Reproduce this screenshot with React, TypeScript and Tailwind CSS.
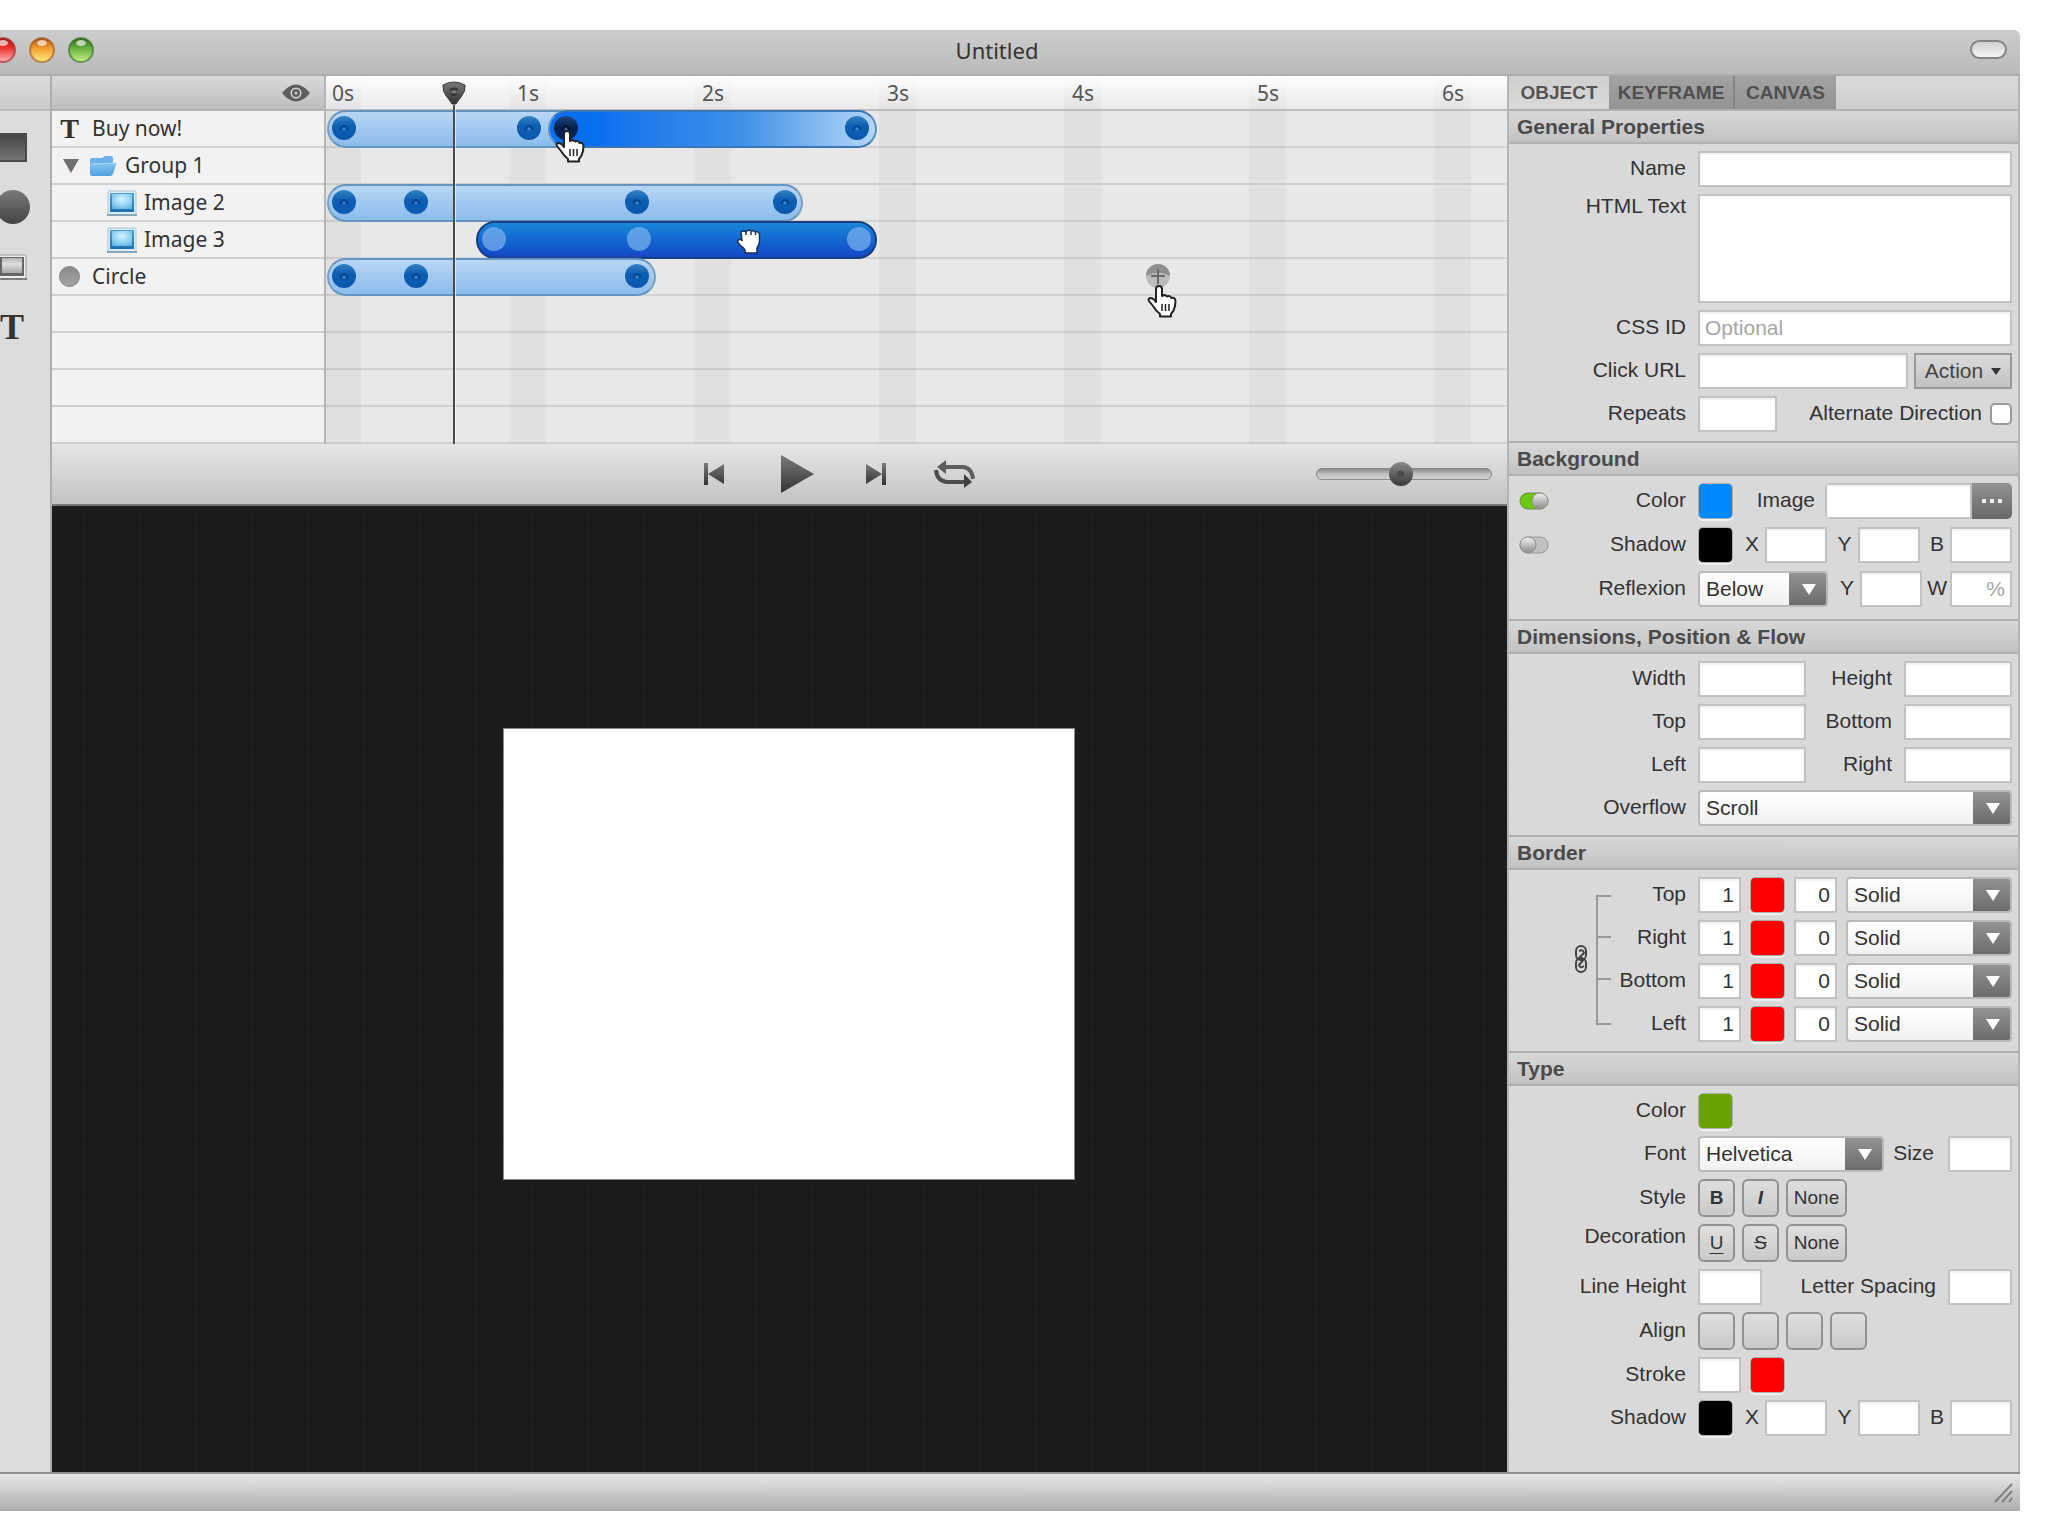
import React from 'react';

const RULER = ['0s', '1s', '2s', '3s', '4s', '5s', '6s'];

type Keyframe = { x: number; dark?: boolean };
type Bar = { start: number; end: number; kind: 'light' | 'fade' | 'solid'; keys: Keyframe[] };
type Layer = { name: string; icon: 'text' | 'group' | 'image' | 'circle' | null; bars: Bar[] };

// bar and keyframe positions are in timeline pixels, 185px per second
const LAYERS: Layer[] = [
  {
    name: 'Buy now!',
    icon: 'text',
    bars: [
      { start: 1, end: 250, kind: 'light', keys: [{ x: 18 }, { x: 203 }] },
      { start: 222, end: 551, kind: 'fade', keys: [{ x: 240, dark: true }, { x: 531 }] },
    ],
  },
  { name: 'Group 1', icon: 'group', bars: [] },
  {
    name: 'Image 2',
    icon: 'image',
    bars: [{ start: 1, end: 477, kind: 'light', keys: [{ x: 18 }, { x: 90 }, { x: 311 }, { x: 459 }] }],
  },
  {
    name: 'Image 3',
    icon: 'image',
    bars: [{ start: 150, end: 551, kind: 'solid', keys: [{ x: 168 }, { x: 313 }, { x: 533 }] }],
  },
  {
    name: 'Circle',
    icon: 'circle',
    bars: [{ start: 1, end: 330, kind: 'light', keys: [{ x: 18 }, { x: 90 }, { x: 311 }] }],
  },
  { name: '', icon: null, bars: [] },
  { name: '', icon: null, bars: [] },
  { name: '', icon: null, bars: [] },
  { name: '', icon: null, bars: [] },
];

const BAR_STYLE = {
  light: 'border-[#7d9fc0] border-y-[#6495c2] bg-linear-to-b from-[#b8d6f5] to-[#8bbcec]',
  fade: 'border-[#5b8fc9] border-y-[#3a76ba] bg-linear-to-r from-[#0a6fee] from-15% via-[#3f92e8] via-60% to-[#b5d6f5]',
  solid: 'border-[#173f80] bg-linear-to-b from-[#1a86d8] to-[#1546c6]',
};

const Defs = () => (
  <svg className="absolute h-0 w-0" aria-hidden="true">
    <defs>
      <linearGradient id="key" x1="0" y1="0" x2="0" y2="1">
        <stop offset="0" stopColor="#3583c4" />
        <stop offset="0.4" stopColor="#0d5fb4" />
        <stop offset="1" stopColor="#0a58ad" />
      </linearGradient>
      <linearGradient id="keyDark" x1="0" y1="0" x2="0" y2="1">
        <stop offset="0" stopColor="#1d477e" />
        <stop offset="0.5" stopColor="#04214f" />
        <stop offset="1" stopColor="#04245a" />
      </linearGradient>
      <linearGradient id="steel" x1="0" y1="0" x2="0" y2="1">
        <stop offset="0" stopColor="#7a7a7a" />
        <stop offset="1" stopColor="#333333" />
      </linearGradient>
      <linearGradient id="picture" x1="0" y1="0" x2="0" y2="1">
        <stop offset="0" stopColor="#4f9fd2" />
        <stop offset="1" stopColor="#1d6fae" />
      </linearGradient>
      <radialGradient id="pictureGlow" cx="0.5" cy="0.35" r="0.75">
        <stop offset="0" stopColor="#d5f3ff" />
        <stop offset="0.6" stopColor="#8fd0f3" />
        <stop offset="1" stopColor="#5fb0e0" />
      </radialGradient>
      <linearGradient id="pictureGray" x1="0" y1="0" x2="0" y2="1">
        <stop offset="0" stopColor="#b5b5b5" />
        <stop offset="0.4" stopColor="#dedede" />
        <stop offset="1" stopColor="#a8a8a8" />
      </linearGradient>
      <linearGradient id="folder" x1="0" y1="0" x2="0" y2="1">
        <stop offset="0" stopColor="#86c4f3" />
        <stop offset="1" stopColor="#4f9fe3" />
      </linearGradient>
      <linearGradient id="knob" x1="0" y1="0" x2="0" y2="1">
        <stop offset="0" stopColor="#f2f2f2" />
        <stop offset="1" stopColor="#8b8b8b" />
      </linearGradient>
    </defs>
  </svg>
);

const LIGHTS = [
  { name: 'Close', id: 'lr', top: '#a3201d', mid: '#ec2f2b', low: '#ffb9b4' },
  { name: 'Minimize', id: 'ly', top: '#a8500f', mid: '#f0982b', low: '#ffef86' },
  { name: 'Zoom', id: 'lg', top: '#2f6b1d', mid: '#62ad3a', low: '#c9f08c' },
];

const TrafficLights = () => (
  <div className="-ml-[10px] flex gap-[13px]">
    {LIGHTS.map((l) => (
      <button key={l.id} aria-label={l.name} className="h-[26px] w-[26px]">
        <svg viewBox="0 0 26 26">
          <defs>
            <linearGradient id={l.id} x1="0" y1="0" x2="0" y2="1">
              <stop offset="0" stopColor={l.top} />
              <stop offset="0.4" stopColor={l.mid} />
              <stop offset="1" stopColor={l.low} />
            </linearGradient>
          </defs>
          <circle cx="13" cy="13" r="12" fill={`url(#${l.id})`} stroke={l.top} strokeOpacity="0.6" strokeWidth="2" />
          <ellipse cx="13" cy="6" rx="5" ry="3" fill="#fff" fillOpacity="0.65" />
        </svg>
      </button>
    ))}
  </div>
);

const PictureIcon = ({ gray }: { gray?: boolean }) => (
  <svg viewBox="0 0 30 26" className="h-[26px] w-[30px] shrink-0">
    <rect x="1" y="1" width="28" height="24" rx="1" fill={gray ? '#ededed' : '#dcecf7'} stroke={gray ? '#9a9a9a' : '#a9c4d8'} />
    <rect x="3" y="3" width="24" height="19" fill={gray ? '#666' : 'url(#picture)'} />
    <rect x="5" y="4" width="20" height="15" fill={gray ? 'url(#pictureGray)' : 'url(#pictureGlow)'} />
    <path d="M0 25h30" stroke={gray ? '#7d7d7d' : '#87a5bb'} strokeWidth="2" />
  </svg>
);

const FolderIcon = () => (
  <svg viewBox="0 0 28 22" className="h-[22px] w-[28px] shrink-0">
    <path d="M1 5Q1 3 3 3h10l3-2h6q2 0 2 2v6H1z" fill="#6bb2ec" />
    <path d="M5 8h21q2 0 1 2l-3 9q-1 2-3 2H3q-2 0-2-2V9z" fill="url(#folder)" />
    <path d="M4 9q10 0 22-1" stroke="#b5dcf9" fill="none" />
  </svg>
);

const HandPointer = () => (
  <svg viewBox="0 0 30 33" className="h-[33px] w-[30px]">
    <path
      d="M9 4Q9 1 12 1t3 3v7q3-2 5 .5 3-1.500 4.500 1.500Q28 12 28.500 16l-.5 5q-1 5-4 8v2.500H13V29q-4-3-7-8l-4-5q-1.500-3 2-3 3 .5 5 4z"
      fill="#fff"
      stroke="#222"
      strokeWidth="2"
      strokeLinejoin="round"
    />
    <path d="M15 19v7M18.500 19v7M22 19v7" stroke="#222" strokeWidth="1.500" />
  </svg>
);

const HandGrab = () => (
  <svg viewBox="0 0 26 25" className="h-[25px] w-[26px]">
    <path
      d="M5 3q3-2 5 0 2-3 5-1 3-1 4 1 4-1 4.500 2.500V12q0 4-2.500 7v5H9v-3q-2-3-5-5-4-4-1-5.500 1-.5 3 1z"
      fill="#fff"
      stroke="#1b2c50"
      strokeWidth="1.500"
      strokeLinejoin="round"
    />
    <path d="M10 3v3M15 2.500V6M19.500 3.500V6" stroke="#1b2c50" strokeWidth="1.500" />
  </svg>
);

const KeyDot = ({ kind, dark }: { kind: Bar['kind']; dark?: boolean }) => (
  <svg viewBox="0 0 24 24" className="h-6 w-6">
    {kind === 'solid' ? (
      <circle cx="12" cy="12" r="12" fill="#7db2ee" fillOpacity="0.7" />
    ) : (
      <>
        <circle cx="12" cy="12" r="12" fill={dark ? 'url(#keyDark)' : 'url(#key)'} />
        <path d="M8 14Q12 6 16 14" fill="none" stroke={dark ? '#01122f' : '#05458f'} strokeWidth="2" />
        <path d="M10 14h4l-2-3z" fill={dark ? '#3f6aa3' : '#3d8bd2'} />
      </>
    )}
  </svg>
);

const LayerRow = ({ layer }: { layer: Layer }) => (
  <div
    className={`flex h-[37px] items-center border-b-2 border-[#d0d0d0] bg-[#f2f2f2] text-[21px] leading-6 text-[#333] ${
      layer.icon === 'image' ? 'gap-[7px] pl-[55px]' : 'gap-3 pl-[7px]'
    }`}
  >
    {layer.icon === 'text' && <span className="w-[21px] text-center font-['Liberation_Serif',serif] text-[28px] font-bold">T</span>}
    {layer.icon === 'group' && (
      <button aria-label="Collapse group" className="w-[18px] pl-1">
        <svg viewBox="0 0 16 14" className="h-[14px] w-4">
          <path d="M0 0h16L8 14z" fill="#6f6f6f" />
        </svg>
      </button>
    )}
    {layer.icon === 'group' && <FolderIcon />}
    {layer.icon === 'image' && <PictureIcon />}
    {layer.icon === 'circle' && <span className="h-[21px] w-[21px] rounded-full border border-[#808080] bg-linear-to-b from-[#8b8b8b] to-[#a3a3a3]" />}
    <span className={`pb-[2px] ${layer.icon === 'group' ? '-ml-1' : ''}`}>{layer.name}</span>
  </div>
);

const TrackRow = ({ layer }: { layer: Layer }) => (
  <div className="relative h-[37px] border-b-2 border-[#00000018]">
    {layer.bars.map((bar) => (
      <div
        key={bar.start}
        className={`absolute -top-px -bottom-[2px] rounded-full border-2 ${BAR_STYLE[bar.kind]}`}
        style={{ left: bar.start, width: bar.end - bar.start }}
      >
        {bar.keys.map((k) => (
          <span key={k.x} className="absolute top-1 -ml-[14px]" style={{ left: k.x - bar.start }}>
            <KeyDot kind={bar.kind} dark={k.dark} />
          </span>
        ))}
      </div>
    ))}
  </div>
);

const Timeline = () => (
  <div className="flex">
    <div className="w-[274px] shrink-0 border-r-2 border-[#b5b5b5]">
      <div className="flex h-[35px] items-center justify-end border-b-2 border-[#b4b4b4] bg-linear-to-b from-[#dadada] to-[#bdbdbd] pr-[14px]">
        <svg viewBox="0 0 28 18" className="h-[18px] w-7">
          <path d="M0 9Q14-8 28 9 14 26 0 9z" fill="#5c5c5c" />
          <circle cx="14" cy="9" r="5.500" fill="#d8d8d8" />
          <circle cx="14" cy="9" r="4" fill="#5c5c5c" />
          <circle cx="14" cy="9" r="1.500" fill="#cfcfcf" />
        </svg>
      </div>
      {LAYERS.map((layer, i) => (
        <LayerRow key={i} layer={layer} />
      ))}
    </div>

    <div className="relative min-w-0 flex-1 overflow-hidden bg-[#e8e8e8] bg-[repeating-linear-gradient(90deg,#e0e0e0_0_35px,#e8e8e8_35px_183px,#e0e0e0_183px_185px)]">
      <div className="flex h-[35px] items-center overflow-hidden border-b-2 border-[#bdbdbd] bg-linear-to-b from-white/95 to-white/10 text-[21px] leading-6 text-[#555]">
        {RULER.map((t) => (
          <span key={t} className="w-[185px] shrink-0 pl-[6px]">
            {t}
          </span>
        ))}
      </div>
      {LAYERS.map((layer, i) => (
        <TrackRow key={i} layer={layer} />
      ))}

      {/* Playhead */}
      <div className="absolute inset-y-0 left-[116px] flex w-6 flex-col items-center pt-[5px]">
        <svg viewBox="0 0 24 24" className="h-6 w-6 shrink-0">
          <path d="M1 4Q12-2 23 4q1 6-4 12-4 5-5 7h-4q-1-2-5-7Q0 10 1 4z" fill="url(#steel)" stroke="#3c3c3c" />
          <path d="M8 9q4-3 8 0M9 13q3 2 6 0" fill="none" stroke="#333" strokeWidth="2" />
          <path d="M10 11h4" stroke="#7d7d7d" strokeWidth="2" />
        </svg>
        <div className="w-[2px] flex-1 bg-[#4a4a4a] shadow-[1px_0_0_rgba(255,255,255,0.6)]" />
      </div>

      {/* New keyframe marker and cursors */}
      <svg viewBox="0 0 24 24" className="absolute top-[188px] left-[820px] h-6 w-6">
        <circle cx="12" cy="12" r="12" fill="#bcbcbc" />
        <path d="M0 12a12 12 0 0 1 24 0Q12 5 0 12z" fill="#8f8f8f" />
        <path d="M12 5v15M5 12h14" stroke="#686868" strokeWidth="2" />
      </svg>
      <div className="absolute top-[209px] left-[821px]">
        <HandPointer />
      </div>
      <div className="absolute top-[54px] left-[229px]">
        <HandPointer />
      </div>
      <div className="absolute top-[153px] left-[410px]">
        <HandGrab />
      </div>
    </div>
  </div>
);

const Transport = () => (
  <div className="flex h-[62px] items-center border-b-2 border-[#777] bg-linear-to-b from-[#e6e6e6] to-[#c3c3c3]">
    <div className="w-[136px] shrink-0" />
    <div className="flex-1" />
    <div className="flex items-center">
      <button aria-label="Go to start" className="mr-[57px]">
        <svg viewBox="0 0 20 24" className="h-6 w-5">
          <path d="M0 1h4v22H0zM20 2v20L4 12z" fill="url(#steel)" />
        </svg>
      </button>
      <button aria-label="Play" className="mr-[52px]">
        <svg viewBox="0 0 33 38" className="h-[38px] w-[33px]">
          <path d="M0 0l33 19L0 38z" fill="url(#steel)" />
        </svg>
      </button>
      <button aria-label="Go to end" className="mr-12">
        <svg viewBox="0 0 20 24" className="h-6 w-5">
          <path d="M16 1h4v22h-4zM0 2v20l16-10z" fill="url(#steel)" />
        </svg>
      </button>
      <button aria-label="Loop">
        <svg viewBox="0 0 42 28" className="h-7 w-[42px]">
          <path d="M10 7h19q9 1 10 12" fill="none" stroke="#5e5e5e" strokeWidth="4" />
          <path d="M12 0v14L3 7z" fill="#5e5e5e" />
          <path d="M31 22H13Q3 21 2 10" fill="none" stroke="#4d4d4d" strokeWidth="4" />
          <path d="M30 14v14l8-6z" fill="#3f3f3f" />
        </svg>
      </button>
    </div>
    <div className="flex flex-1 justify-end pr-[15px]">
      <input
        type="range"
        aria-label="Timeline zoom"
        defaultValue={48}
        className="h-6 w-[176px] appearance-none bg-transparent [&::-webkit-slider-runnable-track]:h-3 [&::-webkit-slider-runnable-track]:rounded-full [&::-webkit-slider-runnable-track]:border [&::-webkit-slider-runnable-track]:border-[#8c8c8c] [&::-webkit-slider-runnable-track]:bg-linear-to-b [&::-webkit-slider-runnable-track]:from-[#8a8a8a] [&::-webkit-slider-runnable-track]:via-[#c0c0c0] [&::-webkit-slider-runnable-track]:to-[#d2d2d2] [&::-webkit-slider-thumb]:-mt-[7px] [&::-webkit-slider-thumb]:h-6 [&::-webkit-slider-thumb]:w-6 [&::-webkit-slider-thumb]:appearance-none [&::-webkit-slider-thumb]:rounded-full [&::-webkit-slider-thumb]:bg-[radial-gradient(circle,#4a4a4a_0_3px,transparent_4px),linear-gradient(#8b8b8b,#383838)]"
      />
    </div>
  </div>
);

const TOOLBTN = 'flex h-[60px] items-center';

const Toolbar = () => (
  <div className="w-[52px] shrink-0 border-r-2 border-[#adadad] bg-[#dcdcdc]">
    <div className="h-[35px] border-b-2 border-[#bcbcbc] bg-linear-to-b from-[#dcdcdc] to-[#cacaca]" />
    <div className="flex flex-col items-start pt-[6px]">
      <button aria-label="Rectangle" className={TOOLBTN}>
        <span className="block h-[29px] w-[27px] border-2 border-l-0 border-[#4a4a4a] bg-linear-to-b from-[#484848] to-[#747474]" />
      </button>
      <button aria-label="Ellipse" className={TOOLBTN}>
        <span className="-ml-1 block h-[34px] w-[34px] rounded-full bg-linear-to-b from-[#7a7a7a] to-[#444]" />
      </button>
      <button aria-label="Image" className={TOOLBTN}>
        <span className="-ml-[3px] block">
          <PictureIcon gray />
        </span>
      </button>
      <button aria-label="Text" className={`${TOOLBTN} font-['Liberation_Serif',serif] text-[36px] font-bold text-[#333]`}>
        T
      </button>
    </div>
  </div>
);

/* ---------- Inspector ---------- */

const Section = ({ title, loose, children }: { title: string; loose?: boolean; children: React.ReactNode }) => (
  <section>
    <h2 className="flex h-[35px] items-center border-y-2 border-[#b0b0b0] bg-linear-to-b from-[#d8d8d8] to-[#c2c2c2] pl-2 text-[21px] font-bold text-[#4a4a4a]">
      {title}
    </h2>
    <div className={`relative flex flex-col pt-[7px] pr-[6px] ${loose ? 'gap-2 pb-3' : 'gap-[7px] pb-[9px]'}`}>{children}</div>
  </section>
);

const Row = ({ label, htmlFor, top, lead, children }: { label: string; htmlFor?: string; top?: boolean; lead?: React.ReactNode; children: React.ReactNode }) => (
  <div className={`flex ${top ? 'items-start' : 'items-center'}`}>
    <div className="flex w-[189px] shrink-0 items-center pr-3 pl-[10px]">
      {lead}
      {htmlFor ? (
        <label htmlFor={htmlFor} className="flex-1 text-right">
          {label}
        </label>
      ) : (
        <span className="flex-1 pb-[2px] text-right">{label}</span>
      )}
    </div>
    <div className="flex min-w-0 flex-1 items-center">{children}</div>
  </div>
);

const Field = ({ id, className, ...rest }: React.InputHTMLAttributes<HTMLInputElement>) => (
  <input
    id={id}
    className={`h-9 min-w-0 border-2 border-[#c2c2c2] bg-white px-[5px] shadow-[inset_0_2px_2px_rgba(0,0,0,0.06)] outline-none placeholder:text-[#a5a5a5] ${className}`}
    {...rest}
  />
);

const Swatch = ({ id, color, label }: { id?: string; color: string; label?: string }) => (
  <input
    id={id}
    type="color"
    aria-label={label}
    defaultValue={color}
    className="h-9 w-[35px] shrink-0 appearance-none overflow-hidden rounded-[5px] border border-black/20 shadow-[0_2px_1px_rgba(255,255,255,0.6)] [&::-webkit-color-swatch]:border-0 [&::-webkit-color-swatch-wrapper]:p-0"
  />
);

const Select = ({ id, label, options, className }: { id?: string; label?: string; options: string[]; className: string }) => (
  <div className={`relative h-9 overflow-hidden rounded-[4px] border-2 border-[#b9b9b9] bg-linear-to-b from-white to-[#f1f1f1] ${className}`}>
    <select id={id} aria-label={label} className="h-full w-full appearance-none bg-transparent pr-10 pl-[6px] leading-6 outline-none">
      {options.map((o) => (
        <option key={o}>{o}</option>
      ))}
    </select>
    <span className="pointer-events-none absolute -top-[2px] -right-[2px] flex h-9 w-[39px] items-center justify-center bg-linear-to-b from-[#959595] to-[#6a6a6a]">
      <svg viewBox="0 0 16 11" className="h-[11px] w-4">
        <path d="M1 0h14L8 11z" fill="#fff" />
      </svg>
    </span>
  </div>
);

const Push = ({ className, ...rest }: React.ButtonHTMLAttributes<HTMLButtonElement>) => (
  <button className={`h-[38px] rounded-[6px] border-2 border-[#929292] bg-linear-to-b from-[#dedede] to-[#cacaca] text-[19px] leading-6 ${className}`} {...rest} />
);

const Toggle = ({ on, label }: { on: boolean; label: string }) => (
  <button role="switch" aria-checked={on} aria-label={label}>
    <svg viewBox="0 0 30 18" className="h-[18px] w-[30px]">
      <rect x="1" y="1" width="28" height="16" rx="8" fill={on ? '#6cc90d' : '#c2c2c2'} stroke={on ? '#6c8b50' : '#989898'} />
      <circle cx={on ? 21 : 9} cy="9" r="8" fill="url(#knob)" stroke="#8f8f8f" />
    </svg>
  </button>
);

const Offsets = ({ id, axes }: { id: string; axes: string[] }) => (
  <div className="flex flex-1 items-center justify-between pl-3">
    {axes.map((a) => (
      <span key={a} className="flex items-center gap-[6px]">
        <label htmlFor={`${id}-${a}`}>{a}</label>
        <Field id={`${id}-${a}`} className="w-[62px]" />
      </span>
    ))}
  </div>
);

const Pair = ({ a, b }: { a: string; b: string }) => (
  <Row label={a} htmlFor={a}>
    <Field id={a} className="w-[108px]" />
    <label htmlFor={b} className="flex-1 pr-3 text-right">
      {b}
    </label>
    <Field id={b} className="w-[108px]" />
  </Row>
);

const Inspector = () => (
  <aside className="w-[513px] shrink-0 border-x-2 border-[#b5b5b5] bg-[#d9d9d9] font-['Liberation_Sans',Arial,sans-serif] text-[21px] leading-6 text-[#333] [&_label]:pb-[2px]">
    <div className="flex h-[33px] bg-linear-to-b from-[#dadada] to-[#cfcfcf] text-[19px] font-bold text-[#555]">
      <button className="w-[100px] bg-linear-to-b from-[#cfcfcf] to-[#d9d9d9]">OBJECT</button>
      <button className="w-[126px] border-r-2 border-[#858585] bg-linear-to-b from-[#a3a3a3] to-[#939393] text-[#4f4f4f]">KEYFRAME</button>
      <button className="w-[101px] bg-linear-to-b from-[#a3a3a3] to-[#939393] text-[#4f4f4f]">CANVAS</button>
    </div>

    <Section title="General Properties">
      <Row label="Name" htmlFor="name">
        <Field id="name" className="flex-1" />
      </Row>
      <Row label="HTML Text" htmlFor="html" top>
        <textarea id="html" className="h-[109px] flex-1 resize-none border-2 border-[#c2c2c2] bg-white p-[6px] outline-none" />
      </Row>
      <Row label="CSS ID" htmlFor="cssid">
        <Field id="cssid" placeholder="Optional" className="flex-1" />
      </Row>
      <Row label="Click URL" htmlFor="url">
        <Field id="url" className="mr-[6px] flex-1" />
        <button className="flex h-9 w-[98px] items-center justify-center gap-2 border-2 border-[#999] bg-linear-to-b from-[#dcdcdc] to-[#c2c2c2] text-[#444]">
          Action
          <svg viewBox="0 0 10 7" className="h-[7px] w-[10px]">
            <path d="M0 0h10L5 7z" fill="#333" />
          </svg>
        </button>
      </Row>
      <Row label="Repeats" htmlFor="repeats">
        <Field id="repeats" className="w-[79px]" />
        <label htmlFor="alternate" className="flex-1 pr-2 text-right">
          Alternate Direction
        </label>
        <input id="alternate" type="checkbox" className="h-[22px] w-[22px] appearance-none rounded-[5px] border-2 border-[#999] bg-white" />
      </Row>
    </Section>

    <Section title="Background" loose>
      <Row label="Color" htmlFor="bgcolor" lead={<Toggle on label="Background enabled" />}>
        <Swatch id="bgcolor" color="#0088ff" />
        <label htmlFor="bgimage" className="flex-1 pr-[10px] text-right">
          Image
        </label>
        <div className="flex w-[187px] overflow-hidden rounded-[5px]">
          <Field id="bgimage" className="flex-1" />
          <button aria-label="Choose image" className="flex h-9 w-10 items-center justify-center bg-linear-to-b from-[#929292] to-[#686868]">
            <svg viewBox="0 0 20 4" className="h-1 w-5">
              <path d="M0 0h4v4H0zM8 0h4v4H8zM16 0h4v4h-4z" fill="#eee" />
            </svg>
          </button>
        </div>
      </Row>
      <Row label="Shadow" htmlFor="bgshadow" lead={<Toggle on={false} label="Shadow enabled" />}>
        <Swatch id="bgshadow" color="#000000" />
        <Offsets id="bg" axes={['X', 'Y', 'B']} />
      </Row>
      <Row label="Reflexion" htmlFor="reflexion">
        <Select id="reflexion" options={['Below']} className="w-[130px]" />
        <div className="flex flex-1 items-center justify-between pl-3">
          <span className="flex items-center gap-[6px]">
            <label htmlFor="refl-y">Y</label>
            <Field id="refl-y" className="w-[62px]" />
          </span>
          <span className="flex items-center gap-[3px]">
            <label htmlFor="refl-w">W</label>
            <Field id="refl-w" placeholder="%" className="w-[62px] text-right" />
          </span>
        </div>
      </Row>
    </Section>

    <Section title="Dimensions, Position & Flow">
      <Pair a="Width" b="Height" />
      <Pair a="Top" b="Bottom" />
      <Pair a="Left" b="Right" />
      <Row label="Overflow" htmlFor="overflow">
        <Select id="overflow" options={['Scroll']} className="flex-1" />
      </Row>
    </Section>

    <Section title="Border">
      <svg viewBox="0 0 40 130" className="absolute top-[25px] left-[64px] h-[130px] w-10">
        <path d="M38 1H24v128h14M24 42h14M24 84h14" fill="none" stroke="#999" strokeWidth="2" />
        <g fill="none" stroke="#444" strokeWidth="2">
          <rect x="3" y="51" width="10" height="14" rx="5" />
          <rect x="3" y="63" width="10" height="14" rx="5" />
          <path d="M6 56q4-2 5 2l-5 5M11 64l-5 6q1 4 5 1" />
        </g>
      </svg>
      {['Top', 'Right', 'Bottom', 'Left'].map((side) => (
        <Row key={side} label={side} htmlFor={`border-${side}`}>
          <div className="flex flex-1 items-center gap-[9px]">
            <Field id={`border-${side}`} defaultValue="1" className="w-[43px] text-right" />
            <Swatch label={`${side} border color`} color="#ff0000" />
            <Field aria-label={`${side} radius`} defaultValue="0" className="w-[43px] text-right" />
            <Select label={`${side} border style`} options={['Solid']} className="flex-1" />
          </div>
        </Row>
      ))}
    </Section>

    <Section title="Type">
      <Row label="Color" htmlFor="typecolor">
        <Swatch id="typecolor" color="#6ba100" />
      </Row>
      <Row label="Font" htmlFor="font">
        <Select id="font" options={['Helvetica']} className="w-[186px]" />
        <label htmlFor="size" className="flex-1 pr-[14px] text-right">
          Size
        </label>
        <Field id="size" className="w-16" />
      </Row>
      <Row label="Style">
        <div className="flex gap-[7px]">
          <Push className="w-[37px] font-bold">B</Push>
          <Push className="w-[37px] font-bold italic">I</Push>
          <Push className="w-[61px]">None</Push>
        </div>
      </Row>
      <Row label="Decoration" top>
        <div className="flex gap-[7px]">
          <Push className="w-[37px] underline underline-offset-4">U</Push>
          <Push className="w-[37px] line-through">S</Push>
          <Push className="w-[61px]">None</Push>
        </div>
      </Row>
      <Row label="Line Height" htmlFor="lineheight">
        <Field id="lineheight" className="w-16" />
        <label htmlFor="spacing" className="flex-1 pr-3 text-right">
          Letter Spacing
        </label>
        <Field id="spacing" className="w-16" />
      </Row>
      <Row label="Align">
        <div className="flex gap-[7px]">
          {['left', 'center', 'right', 'justify'].map((a) => (
            <Push key={a} aria-label={`Align ${a}`} className="w-[37px]" />
          ))}
        </div>
      </Row>
      <Row label="Stroke" htmlFor="stroke">
        <div className="flex gap-[9px]">
          <Field id="stroke" className="w-[43px]" />
          <Swatch label="Stroke color" color="#ff0000" />
        </div>
      </Row>
      <Row label="Shadow" htmlFor="typeshadow">
        <Swatch id="typeshadow" color="#000000" />
        <Offsets id="type" axes={['X', 'Y', 'B']} />
      </Row>
    </Section>
  </aside>
);

export default function App() {
  return (
    <div className="flex min-h-screen flex-col bg-white pt-[30px] pr-7 pb-[25px] font-['Noto_Sans',sans-serif]">
      <Defs />
      <div className="flex flex-1 flex-col overflow-hidden rounded-tr-[6px]">
        {/* Title bar */}
        <header className="flex h-[46px] items-center border-b-2 border-[#adadad] bg-linear-to-b from-[#cdcdcd] to-[#bababa] pr-[13px]">
          <div className="w-[107px] pb-1">
            <TrafficLights />
          </div>
          <h1 className="flex-1 pr-[83px] pb-1 text-center text-[22px] text-[#333]">Untitled</h1>
          <button aria-label="Toggle toolbar" className="mb-[6px] h-[19px] w-[37px] rounded-full border-2 border-[#858585] bg-linear-to-b from-[#cfcfcf] to-[#f4f4f4]" />
        </header>

        <div className="flex flex-1">
          <Toolbar />
          <main className="flex min-w-0 flex-1 flex-col">
            <Timeline />
            <Transport />
            {/* Stage */}
            <div className="flex flex-1 items-center justify-center bg-[#1c1c1c] bg-[repeating-linear-gradient(90deg,#00000014_0_1px,transparent_1px_7px),repeating-linear-gradient(#00000014_0_1px,transparent_1px_7px)] pb-[71px] pl-[19px]">
              <div className="h-[452px] w-[572px] border border-[#888] bg-white" />
            </div>
          </main>
          <Inspector />
        </div>

        {/* Status bar */}
        <footer className="flex h-[39px] items-center justify-end border-t-2 border-[#8d8d8d] bg-linear-to-b from-[#e8e8e8] via-[#c9c9c9] to-[#adadad] pr-[6px]">
          <svg viewBox="0 0 20 20" className="h-5 w-5">
            <path d="M1 19L18 1M8 19L18 8M15 19l3-4" stroke="#808080" strokeWidth="2" />
          </svg>
        </footer>
      </div>
    </div>
  );
}
